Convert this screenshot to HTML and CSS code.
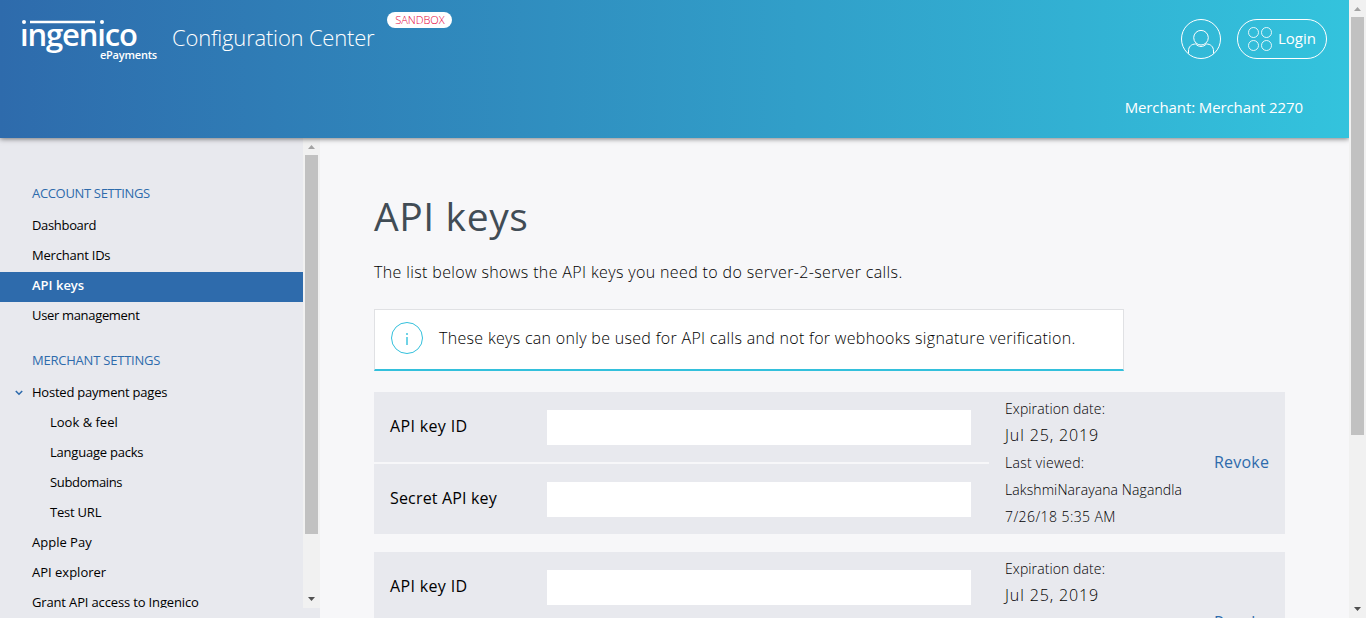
FILE: index.html
```html
<!DOCTYPE html>
<html lang="en">
<head>
<meta charset="utf-8">
<title>API keys - Configuration Center</title>
<link rel="stylesheet" href="styles.css">
</head>
<body>
<div class="page">
  <header class="header">
    <div class="brand">
      <div class="logo">
        <svg class="logo-bar" width="84" height="6" viewBox="0 0 84 6"><circle cx="2" cy="3" r="2" fill="#fff"/><path d="M8 1.800h65v2.400H8z" fill="#fff"/><circle cx="80" cy="3" r="2" fill="#fff"/></svg>
        <span class="logo-name">ıngenıco</span>
        <span class="logo-sub">ePayments</span>
      </div>
      <span class="product">Configuration Center</span>
      <span class="badge"><span>SANDBOX</span></span>
    </div>
    <div class="account">
      <div class="buttons">
        <svg width="40" height="40" viewBox="0 0 40 40" fill="none" stroke="#fff"><circle cx="20" cy="20" r="19.500"/><circle cx="20" cy="18.700" r="7.300"/><path d="M7.500 34.500v-2.500c0-4.500 3-7 7.200-7 3 3.300 7.600 3.300 10.600 0 4.200 0 7.200 2.500 7.200 7v2.500"/></svg>
        <div class="login">
          <svg width="24" height="24" viewBox="0 0 24 24" fill="none" stroke="#fff" stroke-opacity=".85"><circle cx="5.500" cy="5.500" r="5"/><circle cx="18.500" cy="5.500" r="5"/><circle cx="5.500" cy="18.500" r="5"/><circle cx="18.500" cy="18.500" r="5"/></svg>
          <span class="login-text">Login</span>
        </div>
      </div>
      <span class="merchant">Merchant: Merchant 2270</span>
    </div>
  </header>
  <div class="body">
    <aside class="sidebar">
      <nav class="nav">
        <div class="nav-title tight">ACCOUNT SETTINGS</div>
        <div class="nav-item tight">Dashboard</div>
        <div class="nav-item snug">Merchant IDs</div>
        <div class="nav-item active">API keys</div>
        <div class="nav-item tight">User management</div>
        <div class="nav-title second snug">MERCHANT SETTINGS</div>
        <div class="nav-item parent snug"><svg width="8" height="6" viewBox="0 0 8 6" fill="none" stroke="#2e6bac" stroke-width="1.600"><path d="M.8 1 4 4.200 7.200 1"/></svg><span>Hosted payment pages</span></div>
        <div class="nav-item child">Look &amp; feel</div>
        <div class="nav-item child snug">Language packs</div>
        <div class="nav-item child tight">Subdomains</div>
        <div class="nav-item child snug">Test URL</div>
        <div class="nav-item">Apple Pay</div>
        <div class="nav-item">API explorer</div>
        <div class="nav-item snug long">Grant API access to Ingenico</div>
      </nav>
      <div class="scrollbar inner">
        <svg width="17" height="17" viewBox="0 0 17 17"><path d="M5 11h7L8.500 7z" fill="#a3a3a3"/></svg>
        <div class="thumb"></div>
        <svg class="down" width="17" height="17" viewBox="0 0 17 17"><path d="M5 6h7L8.500 10z" fill="#505050"/></svg>
      </div>
    </aside>
    <main class="main">
      <h1>API keys</h1>
      <p class="intro">The list below shows the API keys you need to do server-2-server calls.</p>
      <div class="notice">
        <svg width="32" height="32" viewBox="0 0 32 32" fill="none" stroke="#33c0dc"><circle cx="16" cy="16" r="15.500"/><path d="M16 11v2M16 15v8" stroke-width="2" stroke-opacity=".7"/></svg>
        <span>These keys can only be used for API calls and not for webhooks signature verification.</span>
      </div>
      <section class="key">
        <div class="fields">
          <div class="field"><label class="id">API key ID</label><div class="value"></div></div>
          <div class="field"><label>Secret API key</label><div class="value"></div></div>
        </div>
        <div class="meta">
          <span>Expiration date:</span>
          <span class="big">Jul 25, 2019</span>
          <span class="viewed">Last viewed:</span>
          <span>LakshmiNarayana Nagandla</span>
          <span class="time">7/26/18 5:35 AM</span>
        </div>
        <a class="revoke">Revoke</a>
      </section>
      <section class="key">
        <div class="fields">
          <div class="field"><label class="id">API key ID</label><div class="value"></div></div>
        </div>
        <div class="meta">
          <span>Expiration date:</span>
          <span class="big">Jul 25, 2019</span>
        </div>
        <a class="revoke">Revoke</a>
      </section>
    </main>
  </div>
</div>
<div class="scrollbar outer">
  <svg width="17" height="17" viewBox="0 0 17 17"><path d="M5 11h7L8.500 7z" fill="#a3a3a3"/></svg>
  <div class="thumb"></div>
  <svg class="down" width="17" height="17" viewBox="0 0 17 17"><path d="M5 6h7L8.500 10z" fill="#505050"/></svg>
</div>
</body>
</html>
```

FILE: styles.css
```css
* { box-sizing: border-box; }
body {
  margin: 0;
  height: 618px;
  overflow: hidden;
  display: flex;
  font-family: "Open Sans", "Noto Sans", sans-serif;
  font-size: 16px;
  color: #000;
  background: #f7f7f9;
}
svg { display: block; flex: none; }
span, label, a { white-space: nowrap; }

/* Header */
.page { width: 1349px; height: 618px; display: flex; flex-direction: column; overflow: hidden; }
.header {
  height: 138px;
  flex: none;
  display: flex;
  justify-content: space-between;
  background: linear-gradient(90deg, #2e6bac, #33c3dd);
  box-shadow: 0 1px 5px rgba(0, 0, 0, .5);
  position: relative;
  color: #fff;
}
.brand { display: flex; align-items: flex-start; padding-left: 22px; }
.logo { width: 135px; padding-top: 19px; display: flex; flex-direction: column; align-items: flex-start; }
.logo-name { font-size: 31px; line-height: 30px; font-weight: 600; margin: -6px 0 0 -2px; letter-spacing: -1.15px; }
.logo-sub { font-size: 11px; line-height: 12px; font-weight: 600; align-self: flex-end; letter-spacing: -.2px; }
.product { font-size: 22px; line-height: 30px; font-weight: 300; margin: 22px 0 0 15px; letter-spacing: -.2px; }
.badge {
  margin: 12px 0 0 13px;
  width: 65px;
  height: 16px;
  border-radius: 8px;
  background: #fff;
  color: #e4003a;
  font-size: 11px;
  line-height: 16px;
  font-weight: 300;
  text-align: center;
}
.account { padding: 19px 22px 0 0; display: flex; flex-direction: column; align-items: flex-end; }
.buttons { display: flex; gap: 16px; }
.login { width: 90px; height: 40px; border: 1px solid #fff; border-radius: 20px; display: flex; align-items: center; padding-left: 10px; gap: 6px; }
.login-text { font-size: 15px; line-height: 20px; padding-bottom: 2px; }
.merchant { margin: 38px 24px 0 0; font-size: 15px; line-height: 20px; letter-spacing: -.1px; }

/* Sidebar */
.body { display: flex; flex: 1; min-height: 0; }
.sidebar { width: 320px; height: 480px; background: #e8e9ee; display: flex; flex: none; align-items: flex-start; }
.nav { width: 303px; height: 470px; overflow: hidden; padding-top: 41px; font-size: 13px; }
.nav-title, .nav-item { height: 30px; line-height: 28px; padding-left: 32px; }
.nav-item { line-height: 26px; }
.nav-title { margin-bottom: 3px; color: #2e6bac; }
.nav-title.second { margin-top: 14px; }
.nav-item.active { background: #2e6bac; color: #fff; font-weight: 600; }
.nav-item.child { padding-left: 50px; }
.nav-item.parent { display: flex; padding-left: 15px; gap: 9px; }
.nav-item.parent svg { margin-top: 11px; }
.tight { letter-spacing: -.33px; }
.snug { letter-spacing: -.22px; }
.snug.long { letter-spacing: -.15px; }

/* Scrollbars */
.scrollbar { width: 17px; background: #f1f1f1; display: flex; flex-direction: column; }
.scrollbar.inner { height: 470px; }
.scrollbar.outer { height: 618px; }
.thumb { width: 13px; margin-left: 2px; background: #c1c1c1; height: 418px; }
.inner .thumb { height: 379px; }
.down { margin-top: auto; }

/* Content */
.main { flex: 1; padding: 52px 0 0 54px; }
h1 { margin: 0; font-size: 39px; line-height: 52px; font-weight: 400; color: #414c55; letter-spacing: .6px; }
.intro { margin: 18px 0 0; line-height: 24px; font-weight: 300; letter-spacing: .365px; }
.notice { margin-top: 25px; width: 750px; height: 62px; border: 1px solid #e0e1e4; border-bottom: 2px solid #33c0dc; background: #fff; display: flex; align-items: center; gap: 16px; padding: 0 16px 3px; font-weight: 300; letter-spacing: .31px; }
.key { margin-top: 21px; width: 911px; height: 142px; background: #e8e9ee; display: flex; }
.key + .key { margin-top: 18px; }
.fields { width: 615px; }
.field { height: 70px; display: flex; align-items: center; padding-left: 16px; }
.field + .field { height: 72px; border-top: 2px solid #f7f7f9; }
label { width: 157px; padding-bottom: 2px; letter-spacing: .17px; }
label.id { letter-spacing: .35px; }
.value { width: 424px; height: 35px; background: #fff; }
.meta { width: 209px; padding: 3px 0 0 16px; display: flex; flex-direction: column; align-items: flex-start; font-size: 14px; line-height: 27px; font-weight: 300; letter-spacing: .1px; }
.big { font-size: 16px; letter-spacing: .87px; }
.viewed { letter-spacing: .27px; }
.time { letter-spacing: .42px; }
.revoke { margin: 58px 0 0 16px; line-height: 24px; height: 24px; color: #2e6bac; letter-spacing: .2px; }
```
